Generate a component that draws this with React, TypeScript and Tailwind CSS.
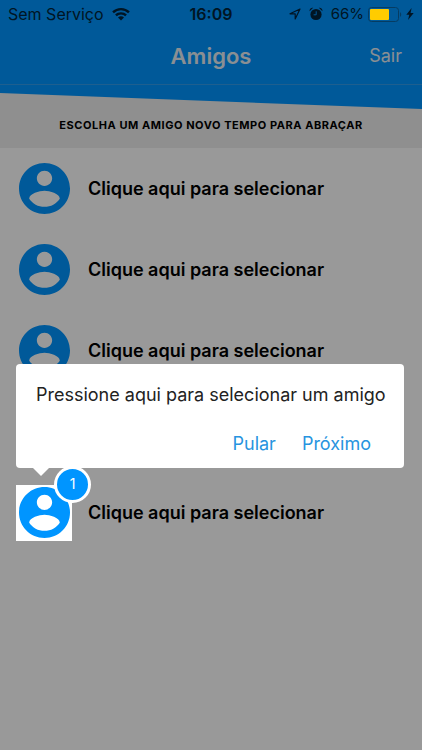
type IconProps = { className?: string };

function AccountCircle({ className }: IconProps) {
  return (
    <svg viewBox="2 2 20 20" className={className} fill="currentColor" aria-hidden="true">
      <path d="M12 2C6.480 2 2 6.480 2 12s4.480 10 10 10 10-4.480 10-10S17.520 2 12 2zm0 3c1.660 0 3 1.340 3 3s-1.340 3-3 3-3-1.340-3-3 1.340-3 3-3zm0 14.200c-2.500 0-4.710-1.280-6-3.220.03-1.990 4-3.080 6-3.080 1.990 0 5.970 1.090 6 3.080-1.290 1.940-3.500 3.220-6 3.220z" />
    </svg>
  );
}

function WifiIcon() {
  return (
    <svg viewBox="0 0 18 13" className="h-[13px] w-[18px]" fill="currentColor" aria-hidden="true">
      <path d="M9 0C5.600 0 2.500 1.300 .2 3.500L1.900 5.200A10.200 10.200 0 0 1 16.100 5.200L17.800 3.500A12.700 12.700 0 0 0 9 0z" />
      <path d="M9 4.200c-2.300 0-4.300.9-5.900 2.300l1.700 1.700a6 6 0 0 1 8.400 0l1.700-1.700A8.500 8.500 0 0 0 9 4.200z" />
      <path d="M9 8.300c-1.200 0-2.200.4-3 1.100l3 3.200 3-3.200c-.8-.7-1.800-1.100-3-1.100z" />
    </svg>
  );
}

function LocationIcon() {
  return (
    <svg viewBox="0 0 12 12" className="size-3" fill="none" stroke="currentColor" strokeWidth="1.200" strokeLinejoin="round" aria-hidden="true">
      <path d="M11 1L1 5.800h5.200V11z" />
    </svg>
  );
}

function AlarmIcon() {
  return (
    <svg viewBox="0 0 14 14" className="size-[14px]" fill="currentColor" aria-hidden="true">
      <circle cx="7" cy="7.500" r="5.600" />
      <path d="M.6 4.200A3 3 0 0 1 4.200 .8zM13.400 4.200A3 3 0 0 0 9.800 .8z" />
      <path d="M7.200 4.300v3.500H4.600" fill="none" stroke="#005999" strokeWidth="1" />
    </svg>
  );
}

function BatteryIcon() {
  return (
    <svg viewBox="0 0 34 15" className="h-[15px] w-[34px]" aria-hidden="true">
      <rect x=".5" y=".5" width="30" height="14" rx="3" fill="none" stroke="#063c62" />
      <rect x="2" y="2" width="19" height="11" rx="1" fill="#ffcc00" />
      <path d="M32 5.200c1.600.6 1.600 4 0 4.600z" fill="#063c62" />
    </svg>
  );
}

function BoltIcon() {
  return (
    <svg viewBox="0 0 8 12" className="h-3 w-2" fill="currentColor" aria-hidden="true">
      <path d="M5.600 0L.3 6.800h3L2 12l5.700-7H4.600z" />
    </svg>
  );
}

function StatusBar() {
  return (
    <div className="relative z-20 grid h-7 grid-cols-[1fr_auto_1fr] items-center px-2 text-base leading-5 text-[#001524]">
      <div className="flex items-center gap-2">
        <span className="whitespace-nowrap">Sem Serviço</span>
        <WifiIcon />
      </div>
      <span className="font-semibold">16:09</span>
      <div className="flex items-center justify-end gap-1">
        <LocationIcon />
        <span className="px-1">
          <AlarmIcon />
        </span>
        <span className="text-[15px]">66%</span>
        <BatteryIcon />
        <BoltIcon />
      </div>
    </div>
  );
}

function TourStep() {
  return (
    <div role="dialog" aria-label="Selecionar amigo" className="absolute right-[18px] bottom-full left-4 z-20 mb-1 rounded-[4px] bg-white px-5 pt-[18px] pb-1">
      <p className="text-center text-lg leading-[26px] whitespace-nowrap text-[#222222]">
        Pressione aqui para selecionar um amigo
      </p>
      <div className="mt-4 flex justify-end text-lg leading-10 text-[#2794e0]">
        <button type="button" className="px-[13px]">Pular</button>
        <button type="button" className="px-[13px]">Próximo</button>
      </div>
      <span className="absolute top-full left-[17px] border-x-8 border-t-8 border-x-transparent border-t-white" />
    </div>
  );
}

type FriendRowProps = { active: boolean; covered: boolean };

function FriendRow({ active, covered }: FriendRowProps) {
  return (
    <li className="relative flex h-[81px] items-center gap-4 px-4">
      <button
        type="button"
        aria-label="Selecionar amigo"
        className={`flex size-14 items-center justify-center text-[#0095ff] ${active ? "relative z-20 bg-white" : ""}`}
      >
        <AccountCircle className="size-[51px]" />
        {active && (
          <span className="absolute -top-[19px] -right-[19px] flex size-[37px] items-center justify-center rounded-full border-[3px] border-white bg-[#0095ff] text-sm text-white">
            1
          </span>
        )}
      </button>
      {/* The row directly above the active one lies behind the tour card */}
      {!covered && (
        <span className="text-lg font-semibold text-black">Clique aqui para selecionar</span>
      )}
      {active && <TourStep />}
    </li>
  );
}

const friends = [1, 2, 3, 4, 5];
const activeFriend = 5;

export default function App() {
  return (
    <div className="relative min-h-screen bg-white font-['Inter',sans-serif]">
      <header className="bg-[#0095ff]">
        <StatusBar />
        <div className="grid h-[57px] grid-cols-[1fr_auto_1fr] items-center border-b border-[#339fee] px-5 text-[#e6eef5]">
          <h1 className="col-start-2 text-[22px] font-semibold">Amigos</h1>
          <button type="button" className="justify-self-end text-lg">Sair</button>
        </div>
      </header>
      <main>
        <section className="bg-[#eeeeee]">
          <svg viewBox="0 0 422 24" preserveAspectRatio="none" className="block h-6 w-full" aria-hidden="true">
            <path d="M0 0H422V24L0 8z" fill="#0095ff" />
          </svg>
          <h2 className="h-[39px] pt-2 text-center text-[11px] leading-4 font-bold tracking-wider text-black">
            ESCOLHA UM AMIGO NOVO TEMPO PARA ABRAÇAR
          </h2>
        </section>
        <ul>
          {friends.map((id) => (
            <FriendRow key={id} active={id === activeFriend} covered={id === activeFriend - 1} />
          ))}
        </ul>
      </main>
      <div className="absolute inset-0 z-10 bg-black/40" />
    </div>
  );
}
